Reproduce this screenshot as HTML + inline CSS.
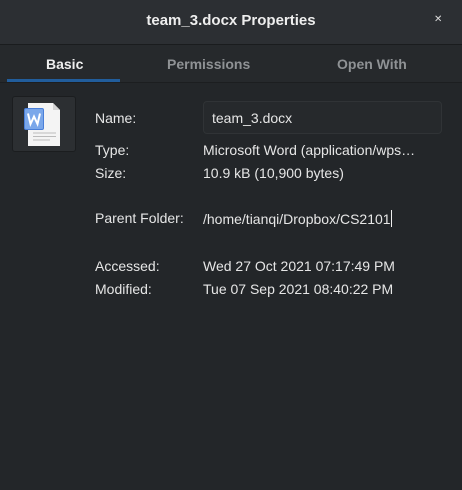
<!DOCTYPE html>
<html><head><style>
body{margin:0;width:462px;height:490px;background:#232629;font-family:"Liberation Sans",sans-serif;color:#e8e8e8;overflow:hidden;position:relative}
.hdr{position:absolute;left:0;top:0;width:462px;height:44px;background:#2c2f33;border-bottom:1px solid #1a1c1e}
.title{position:absolute;top:12px;width:100%;text-align:center;font-weight:bold;font-size:15px;color:#eee}
.x{position:absolute;left:434px;top:14px;font-size:10px;color:#ddd}
.tabs{position:absolute;top:45px;left:0;width:462px;height:37px;background:#26292c;border-bottom:1px solid #1c1e20}
.tab{position:absolute;top:11px;font-weight:bold;font-size:14px;color:#8f9295}
.ul{position:absolute;left:7px;top:34px;width:113px;height:3px;background:#215d9c}
.t{position:absolute;font-size:14px;color:#e6e6e6;white-space:nowrap}
.icon{position:absolute;left:12px;top:96px;width:64px;height:56px;background:#2c2f32;border:1px solid #1b1d1f;border-radius:3px;box-sizing:border-box}
.entry{position:absolute;left:203px;top:101px;width:239px;height:33px;background:#26292c;border:1px solid #303336;border-radius:4px;box-sizing:border-box}
</style></head><body>
<div class="hdr"><div class="title">team_3.docx Properties</div><div class="x">✕</div></div>
<div class="tabs">
<div class="tab" style="left:46px;color:#eee">Basic</div>
<div class="tab" style="left:167px">Permissions</div>
<div class="tab" style="left:337px">Open With</div>
<div class="ul"></div>
</div>
<div class="icon">
<svg width="64" height="56" viewBox="0 0 64 56" style="position:absolute;left:-1px;top:-1px">
<path d="M16 7 H41 L48 14 V50 H16 Z" fill="#f4f4f4"/>
<path d="M41 7 V14 H48 Z" fill="#d4d4d4"/>
<rect x="12.5" y="12.5" width="19" height="21" rx="1.5" fill="#7aa7ea" stroke="#4a7fd8"/>
<path d="M16 17.5 L18.5 28 L22 20.5 L25.5 28 L28 17.5" fill="none" stroke="#fff" stroke-width="2"/>
<path d="M21 37 H44 M21 40.5 H44 M21 44 H38" stroke="#bbb" stroke-width="1"/>
</svg></div>
<div class="entry"></div>
<div class="t" style="left:95px;top:110px">Name:</div>
<div class="t" style="left:212px;top:110px">team_3.docx</div>
<div class="t" style="left:95px;top:142px">Type:</div>
<div class="t" style="left:203px;top:142px">Microsoft Word (application/wps…</div>
<div class="t" style="left:95px;top:165px">Size:</div>
<div class="t" style="left:203px;top:165px">10.9 kB (10,900 bytes)</div>
<div class="t" style="left:95px;top:210px">Parent Folder:</div>
<div class="t" style="left:203px;top:210px">/home/tianqi/Dropbox/CS2101<span style="display:inline-block;width:1px;height:17px;background:#eee;vertical-align:-3px"></span></div>
<div class="t" style="left:95px;top:258px">Accessed:</div>
<div class="t" style="left:203px;top:258px">Wed 27 Oct 2021 07:17:49 PM</div>
<div class="t" style="left:95px;top:281px">Modified:</div>
<div class="t" style="left:203px;top:281px">Tue 07 Sep 2021 08:40:22 PM</div>
</body></html>
